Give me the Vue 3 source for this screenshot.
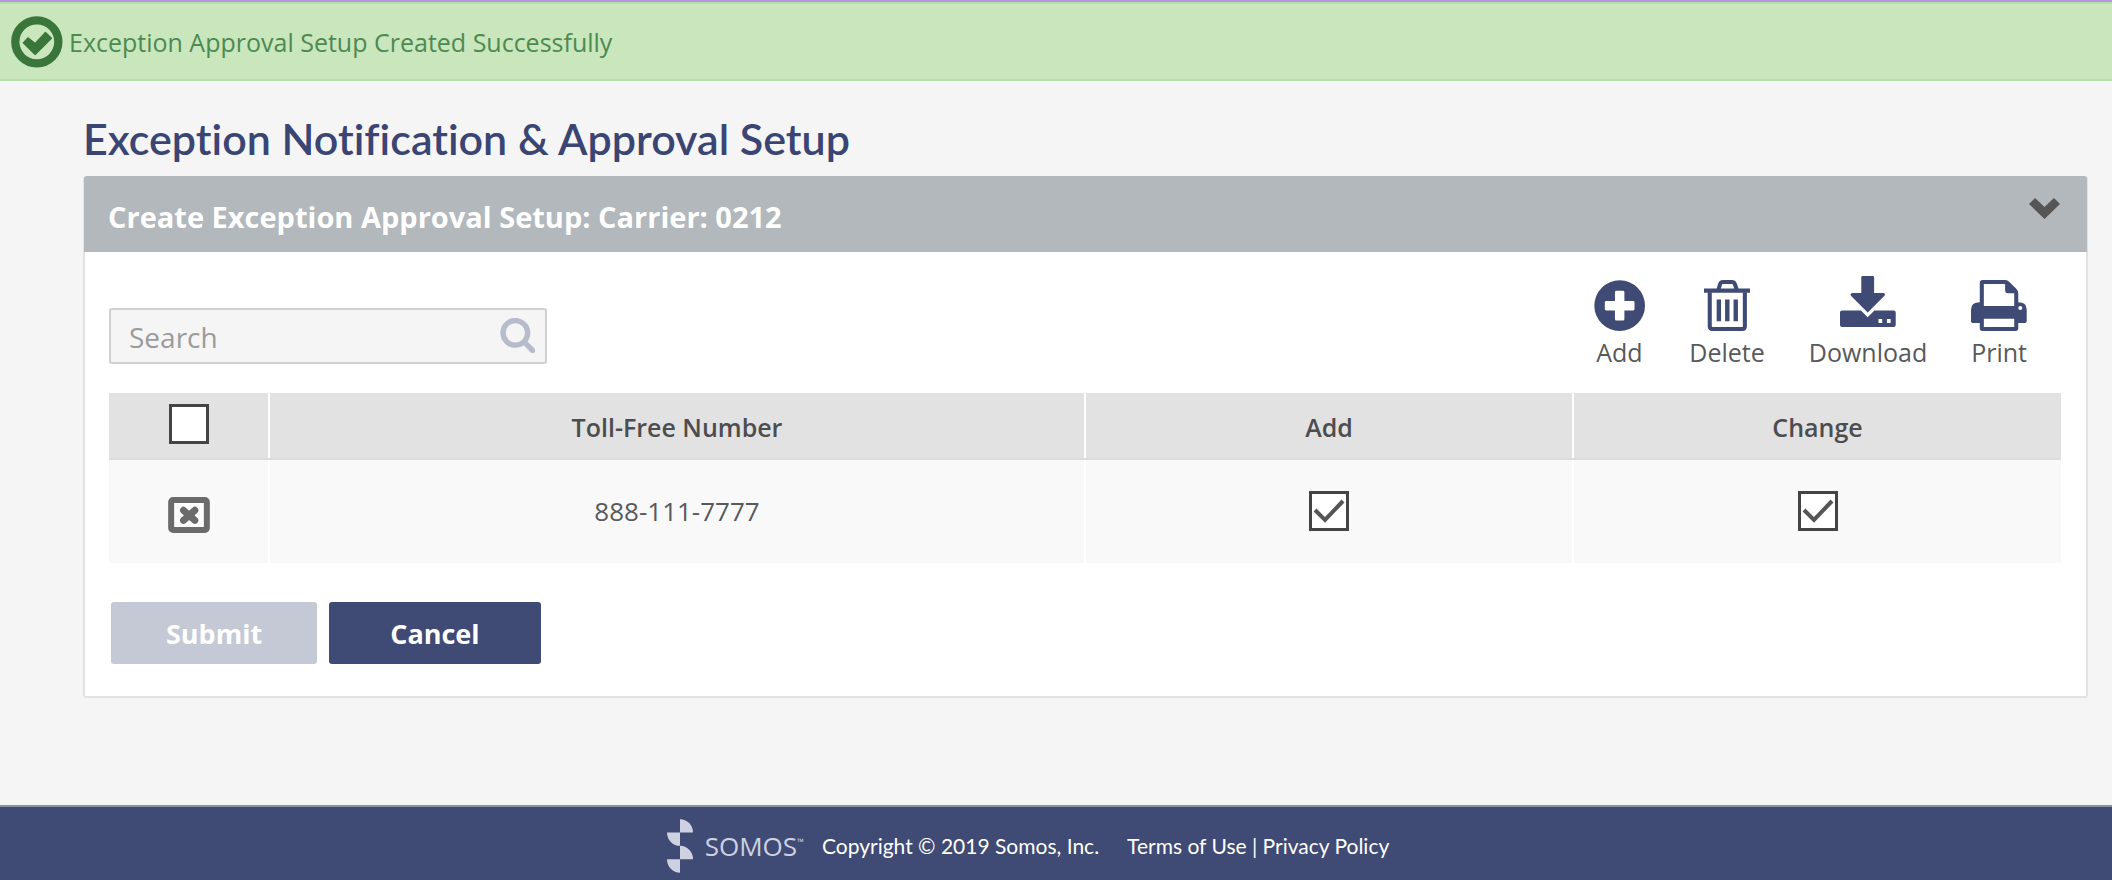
<template>
    <div class="page">
        <div v-if="notice" class="notice" role="status">
            <svg class="notice-icon" viewBox="0 0 157 155" aria-hidden="true">
                <circle cx="78" cy="77" r="65" fill="none" stroke="currentColor" stroke-width="25" />
                <path d="M37 80L51 65L73 82L104 49L122 66L73 115Z" fill="currentColor" stroke="currentColor"
                    stroke-width="4" stroke-linejoin="round" />
            </svg>
            <span>{{ notice }}</span>
        </div>

        <main class="content">
            <h1>Exception Notification &amp; Approval Setup</h1>

            <section class="panel">
                <header class="panel-header">
                    <h2>Create Exception Approval Setup: Carrier: {{ carrier }}</h2>
                    <button type="button" class="collapse" aria-label="Toggle panel" @click="open = !open">
                        <svg viewBox="0 0 62 42" aria-hidden="true">
                            <path d="M0 12L12 0L31 18L50 0L62 12L31 42Z" fill="currentColor" />
                        </svg>
                    </button>
                </header>

                <div v-if="open" class="panel-body">
                    <div class="toolbar">
                        <div class="search">
                            <input v-model="query" type="text" placeholder="Search" aria-label="Search">
                            <svg viewBox="0 0 105 104" aria-hidden="true">
                                <circle cx="46" cy="44" r="37" />
                                <path d="M73 72L98 97" stroke-linecap="round" />
                            </svg>
                        </div>

                        <div class="actions">
                            <button type="button" @click="addRow">
                                <svg viewBox="0 0 153 151" aria-hidden="true">
                                    <circle cx="76" cy="76" r="75" fill="currentColor" />
                                    <path d="M66 32H86Q90 32 90 36V62H116Q120 62 120 66V86Q120 90 116 90H90V116Q90 120 86 120H66Q62 120 62 116V90H36Q32 90 32 86V66Q32 62 36 62H62V36Q62 32 66 32Z"
                                        fill="#fff" />
                                </svg>
                                <span>Add</span>
                            </button>
                            <button type="button" @click="removeSelected">
                                <svg viewBox="0 0 139 151" aria-hidden="true">
                                    <path d="M0 25H139V38H0Z" fill="currentColor" />
                                    <path d="M43 28L48 11Q50 6 56 6H83Q89 6 91 11L97 28" fill="none"
                                        stroke="currentColor" stroke-width="12" />
                                    <path d="M17 36V137Q17 145 25 145H114Q121 145 121 137V36" fill="none"
                                        stroke="currentColor" stroke-width="12" />
                                    <path d="M44 58V122M69 58V122M94 58V122" stroke="currentColor"
                                        stroke-width="13" />
                                </svg>
                                <span>Delete</span>
                            </button>
                            <button type="button" class="raised">
                                <svg viewBox="0 0 165 151" aria-hidden="true">
                                    <path d="M6 102H62L82 122L102 102H159Q165 102 165 108V145Q165 151 159 151H6Q0 151 0 145V108Q0 102 6 102Z"
                                        fill="currentColor" />
                                    <path d="M67 0H98Q101 0 101 4V50H129Q136 52 131 59L82 108L33 59Q28 52 36 50H63V4Q63 0 67 0Z"
                                        fill="currentColor" />
                                    <path d="M114 127H125V139H114ZM139 127H150V139H139Z" fill="#fff" />
                                </svg>
                                <span>Download</span>
                            </button>
                            <button type="button" @click="printPage">
                                <svg viewBox="0 0 165 151" aria-hidden="true">
                                    <path d="M34 0H102Q108 0 113 5L134 26Q140 32 140 40V66Q165 66 165 88V122Q165 127 160 127H140V143Q140 151 132 151H34Q26 151 26 143V127H5Q0 127 0 122V88Q0 66 26 66V8Q26 0 34 0Z"
                                        fill="currentColor" />
                                    <path d="M38 12H101V32Q101 39 108 39H128V77H38ZM38 115H128V139H38Z" fill="#fff" />
                                    <circle cx="146" cy="83" r="6" fill="#fff" />
                                </svg>
                                <span>Print</span>
                            </button>
                        </div>
                    </div>

                    <table>
                        <thead>
                            <tr>
                                <th class="col-select">
                                    <label class="check">
                                        <input v-model="allSelected" type="checkbox" aria-label="Select all">
                                        <svg v-if="allSelected" viewBox="0 0 40 40" aria-hidden="true">
                                            <path d="M6 19L16 29L34 10" />
                                        </svg>
                                    </label>
                                </th>
                                <th>Toll-Free Number</th>
                                <th class="col-flag">Add</th>
                                <th class="col-flag">Change</th>
                            </tr>
                        </thead>
                        <tbody>
                            <tr v-for="(row, index) in filteredRows" :key="index">
                                <td>
                                    <button type="button" class="remove" aria-label="Remove row"
                                        @click="removeRow(row)">
                                        <svg viewBox="0 0 125 108" aria-hidden="true">
                                            <rect x="9" y="9" width="107" height="90" rx="6" fill="#fff"
                                                stroke="currentColor" stroke-width="18" />
                                            <path d="M46 40L80 70M80 40L46 70" stroke="currentColor"
                                                stroke-width="21" stroke-linecap="round" />
                                        </svg>
                                    </button>
                                </td>
                                <td>{{ row.number }}</td>
                                <td v-for="flag in ['add', 'change']" :key="flag">
                                    <label class="check">
                                        <input v-model="row[flag]" type="checkbox" :aria-label="flag">
                                        <svg v-if="row[flag]" viewBox="0 0 40 40" aria-hidden="true">
                                            <path d="M6 19L16 29L34 10" />
                                        </svg>
                                    </label>
                                </td>
                            </tr>
                        </tbody>
                    </table>

                    <div class="buttons">
                        <button type="button" class="submit" disabled>Submit</button>
                        <button type="button" class="cancel">Cancel</button>
                    </div>
                </div>
            </section>
        </main>

        <footer class="footer">
            <div class="logo">
                <svg viewBox="0 0 78 161" aria-hidden="true">
                    <path d="M39 0A39 40 0 0 1 78 40H39ZM0 40H39V80A39 40 0 0 1 0 40ZM39 80A39 40 0 0 1 78 120H39ZM0 120H39V161A39 41 0 0 1 0 120Z"
                        fill="currentColor" />
                </svg>
                <span>SOMOS<sup>™</sup></span>
            </div>
            <span class="copyright">Copyright © 2019 Somos, Inc.</span>
            <nav>
                <a href="#terms">Terms of Use</a> | <a href="#privacy">Privacy Policy</a>
            </nav>
        </footer>
    </div>
</template>

<script setup>
import { ref, computed } from 'vue';

const notice = ref('Exception Approval Setup Created Successfully');
const carrier = ref('0212');
const open = ref(true);
const query = ref('');
const allSelected = ref(false);

const rows = ref([
    { number: '888-111-7777', add: true, change: true },
]);

const filteredRows = computed(() => rows.value.filter(row => row.number.includes(query.value)));

function addRow() {
    rows.value.push({ number: '', add: false, change: false });
}

function removeRow(row) {
    rows.value = rows.value.filter(item => item !== row);
}

// Only the header checkbox selects rows
function removeSelected() {
    if (allSelected.value) {
        rows.value = [];
        allSelected.value = false;
    }
}

function printPage() {
    window.print();
}
</script>

<style>
body {
    margin: 0;
    background: #f5f5f5;
}
</style>

<style scoped>
* {
    box-sizing: border-box;
}

.page {
    display: flex;
    flex-direction: column;
    min-height: 100vh;
    border-top: 2px solid #b594e0;
    font-family: "Open Sans", "Noto Sans", sans-serif;
    font-size: 25px;
    color: #58595b;
}

button {
    border: none;
    padding: 0;
    background: none;
    font: inherit;
    color: inherit;
    cursor: pointer;
}

svg {
    display: block;
}

.notice {
    display: flex;
    align-items: center;
    gap: 6px;
    height: 79px;
    padding-left: 11px;
    border-top: 2px solid #b6dfa5;
    border-bottom: 2px solid #b6dfa5;
    background: #c9e6bc;
    color: #4c8a52;
}

.notice-icon {
    width: 52px;
    height: 52px;
    color: #3a763c;
}

.content {
    padding: 33px 24px 32px 83px;
}

h1 {
    margin: 0 0 12px;
    font-family: Lato, sans-serif;
    font-size: 43px;
    font-weight: 600;
    font-variant-ligatures: none;
    line-height: 50px;
    color: #3a4573;
}

.panel {
    border: 2px solid #e2e2e2;
    border-top: 0;
    border-radius: 3px;
    background: #fff;
}

.panel-header {
    display: flex;
    justify-content: space-between;
    align-items: flex-start;
    height: 76px;
    margin: 0 -1px;
    padding: 22px 27px 0 24px;
    border-radius: 3px 3px 0 0;
    background: #b2b8bb;
}

h2 {
    margin: 0;
    font-size: 29px;
    font-weight: 700;
    line-height: 38px;
    color: #fff;
}

.collapse svg {
    width: 31px;
    height: 21px;
    color: #555;
}

.panel-body {
    padding: 24px 25px 32px 24px;
}

.toolbar {
    display: flex;
    justify-content: space-between;
    align-items: flex-end;
    padding-right: 34px;
}

.search {
    position: relative;
    width: 438px;
    margin-bottom: 5px;
}

.search input {
    display: block;
    width: 100%;
    height: 56px;
    padding: 2px 56px 0 18px;
    border: 2px solid #cfcfcf;
    border-radius: 3px;
    background: #f5f5f5;
    font: inherit;
    font-size: 28px;
    color: #58595b;
}

.search input::placeholder {
    color: #9b9b9b;
    opacity: 1;
}

.search svg {
    position: absolute;
    top: 10px;
    right: 12px;
    width: 35px;
    height: 35px;
    fill: none;
    stroke: #b7bccd;
    stroke-width: 16;
}

.actions {
    display: flex;
    align-items: flex-end;
    gap: 44px;
}

.actions button {
    display: flex;
    flex-direction: column;
    align-items: center;
    gap: 4px;
    line-height: 34px;
}

.actions svg {
    height: 51px;
    color: #3f4a75;
}

.actions .raised {
    gap: 8px;
}

table {
    width: 100%;
    margin-top: 24px;
    border-collapse: collapse;
    table-layout: fixed;
    text-align: center;
}

th,
td {
    padding: 0;
    border-left: 2px solid #fff;
}

th:first-child,
td:first-child {
    border-left: 0;
}

th {
    height: 66px;
    padding-top: 3px;
    border-bottom: 2px solid #dcdcdc;
    background: #e2e2e2;
    font-weight: 600;
    color: #4d4d4f;
}

th.col-select {
    width: 160px;
    padding: 0 0 4px;
}

td {
    height: 104px;
    padding-bottom: 2px;
    background: #f9f9f9;
    font-size: 26px;
}

.col-flag {
    width: 25%;
}

.check {
    position: relative;
    display: block;
    width: 40px;
    height: 40px;
    margin: 0 auto;
}

.check input {
    display: block;
    width: 40px;
    height: 40px;
    margin: 0;
    border: 3px solid #444;
    background: #fff;
    appearance: none;
}

.check svg {
    position: absolute;
    inset: 0;
    fill: none;
    stroke: #555;
    stroke-width: 4;
    pointer-events: none;
}

.remove {
    display: block;
    margin: 8px auto 0;
    color: #6b6b6b;
}

.remove svg {
    width: 42px;
    height: 36px;
}

.buttons {
    display: flex;
    gap: 12px;
    margin-top: 39px;
    padding-left: 2px;
}

.buttons button {
    height: 62px;
    border-radius: 3px;
    background: #3f4a75;
    font-size: 27px;
    font-weight: 700;
    color: #fff;
}

.buttons .submit {
    padding: 0 55px;
}

.buttons .cancel {
    padding: 0 61px;
}

.buttons button:disabled {
    background: #c5c8d5;
    cursor: default;
}

.footer {
    display: flex;
    justify-content: center;
    align-items: center;
    height: 75px;
    margin-top: auto;
    padding: 4px 56px 0 0;
    border-top: 2px solid #8a92a8;
    background: #3f4a75;
    font-family: Lato, sans-serif;
    font-size: 21px;
    color: #fff;
}

.footer a {
    color: inherit;
    text-decoration: none;
}

.logo {
    display: flex;
    align-items: center;
    gap: 12px;
    color: #ced1e0;
}

.logo svg {
    width: 26px;
    height: 54px;
}

.logo span {
    font-family: "Open Sans", sans-serif;
    font-size: 26px;
}

.logo sup {
    font-size: 9px;
    line-height: 0;
    vertical-align: 11px;
}

.copyright {
    margin: 0 28px 0 18px;
}
</style>
